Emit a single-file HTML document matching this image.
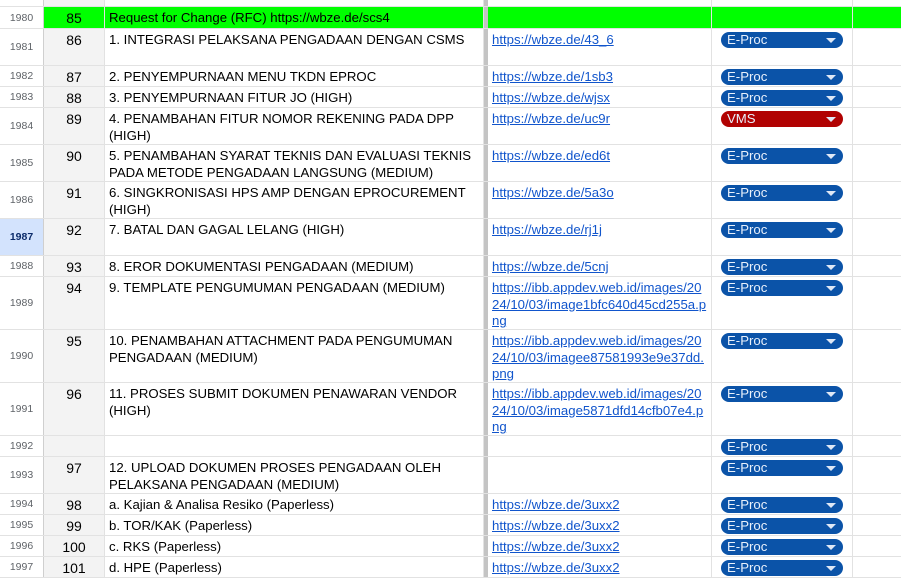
<!DOCTYPE html>
<html><head><style>
body{margin:0;width:901px;height:577px;overflow:hidden;background:#fff;font-family:"Liberation Sans",Arial,sans-serif;}
.r{position:absolute;left:0;width:901px;box-sizing:border-box;border-bottom:1px solid #e2e2e2;}
.c{position:absolute;top:0;bottom:0;box-sizing:border-box;border-right:1px solid #e2e2e2;font-size:13.2px;line-height:16.5px;color:#000;}
.h{left:0;width:44px;border-right:1px solid #cfcfcf;color:#5f6368;font-size:10.5px;display:flex;align-items:center;justify-content:center;line-height:12px;}
.a{left:44px;width:61px;background:#f3f3f3;text-align:center;padding-top:3px;font-size:14px;}
.b{left:105px;width:379px;padding:3px 3px 0 4px;}
.d{left:484px;width:4px;background:#c4c4c4;border-right:none;}
.cc{left:488px;width:224px;padding:3px 0 0 4px;color:#1155cc;text-decoration:underline;white-space:nowrap;overflow:hidden;}
.dd{left:712px;width:141px;}
.e{left:853px;width:48px;border-right:none;}
.chip{position:absolute;left:9px;top:3px;width:122px;height:16px;border-radius:8px;background:#0b53a8;color:#e8f0fb;font-size:13.2px;line-height:16px;padding-left:6px;box-sizing:border-box;}
.chip.v{background:#b10202;}
.chip:after{content:"";position:absolute;right:7px;top:6px;border-left:5px solid transparent;border-right:5px solid transparent;border-top:5px solid #dfe8f5;}
.g .a,.g .b,.g .cc,.g .dd,.g .e{background:#00ff00;}
.sel{background:#d3e3fd;color:#0b2b6a;font-weight:bold;}
</style></head><body>
<div class="r" style="top:-14px;height:21px"><div class="c h">1979</div><div class="c a"></div><div class="c b"></div><div class="c d"></div><div class="c cc"></div><div class="c dd"></div><div class="c e"></div></div>
<div class="r g" style="top:7px;height:22px"><div class="c h">1980</div><div class="c a">85</div><div class="c b">Request for Change (RFC) https://wbze.de/scs4</div><div class="c d"></div><div class="c cc"></div><div class="c dd"></div><div class="c e"></div></div>
<div class="r" style="top:29px;height:37px"><div class="c h">1981</div><div class="c a">86</div><div class="c b">1. INTEGRASI PELAKSANA PENGADAAN DENGAN CSMS</div><div class="c d"></div><div class="c cc">https://wbze.de/43_6</div><div class="c dd"><div class="chip">E-Proc</div></div><div class="c e"></div></div>
<div class="r" style="top:66px;height:21px"><div class="c h">1982</div><div class="c a">87</div><div class="c b">2. PENYEMPURNAAN MENU TKDN EPROC</div><div class="c d"></div><div class="c cc">https://wbze.de/1sb3</div><div class="c dd"><div class="chip">E-Proc</div></div><div class="c e"></div></div>
<div class="r" style="top:87px;height:21px"><div class="c h">1983</div><div class="c a">88</div><div class="c b">3. PENYEMPURNAAN FITUR JO (HIGH)</div><div class="c d"></div><div class="c cc">https://wbze.de/wjsx</div><div class="c dd"><div class="chip">E-Proc</div></div><div class="c e"></div></div>
<div class="r" style="top:108px;height:37px"><div class="c h">1984</div><div class="c a">89</div><div class="c b">4. PENAMBAHAN FITUR NOMOR REKENING PADA DPP (HIGH)</div><div class="c d"></div><div class="c cc">https://wbze.de/uc9r</div><div class="c dd"><div class="chip v">VMS</div></div><div class="c e"></div></div>
<div class="r" style="top:145px;height:37px"><div class="c h">1985</div><div class="c a">90</div><div class="c b">5. PENAMBAHAN SYARAT TEKNIS DAN EVALUASI TEKNIS PADA METODE PENGADAAN LANGSUNG (MEDIUM)</div><div class="c d"></div><div class="c cc">https://wbze.de/ed6t</div><div class="c dd"><div class="chip">E-Proc</div></div><div class="c e"></div></div>
<div class="r" style="top:182px;height:37px"><div class="c h">1986</div><div class="c a">91</div><div class="c b">6. SINGKRONISASI HPS AMP DENGAN EPROCUREMENT (HIGH)</div><div class="c d"></div><div class="c cc">https://wbze.de/5a3o</div><div class="c dd"><div class="chip">E-Proc</div></div><div class="c e"></div></div>
<div class="r" style="top:219px;height:37px"><div class="c h sel">1987</div><div class="c a">92</div><div class="c b">7. BATAL DAN GAGAL LELANG (HIGH)</div><div class="c d"></div><div class="c cc">https://wbze.de/rj1j</div><div class="c dd"><div class="chip">E-Proc</div></div><div class="c e"></div></div>
<div class="r" style="top:256px;height:21px"><div class="c h">1988</div><div class="c a">93</div><div class="c b">8. EROR DOKUMENTASI PENGADAAN (MEDIUM)</div><div class="c d"></div><div class="c cc">https://wbze.de/5cnj</div><div class="c dd"><div class="chip">E-Proc</div></div><div class="c e"></div></div>
<div class="r" style="top:277px;height:53px"><div class="c h">1989</div><div class="c a">94</div><div class="c b">9. TEMPLATE PENGUMUMAN PENGADAAN (MEDIUM)</div><div class="c d"></div><div class="c cc">https://ibb.appdev.web.id/images/20<br>24/10/03/image1bfc640d45cd255a.p<br>ng</div><div class="c dd"><div class="chip">E-Proc</div></div><div class="c e"></div></div>
<div class="r" style="top:330px;height:53px"><div class="c h">1990</div><div class="c a">95</div><div class="c b">10. PENAMBAHAN ATTACHMENT PADA PENGUMUMAN PENGADAAN (MEDIUM)</div><div class="c d"></div><div class="c cc">https://ibb.appdev.web.id/images/20<br>24/10/03/imagee87581993e9e37dd.<br>png</div><div class="c dd"><div class="chip">E-Proc</div></div><div class="c e"></div></div>
<div class="r" style="top:383px;height:53px"><div class="c h">1991</div><div class="c a">96</div><div class="c b">11. PROSES SUBMIT DOKUMEN PENAWARAN VENDOR (HIGH)</div><div class="c d"></div><div class="c cc">https://ibb.appdev.web.id/images/20<br>24/10/03/image5871dfd14cfb07e4.p<br>ng</div><div class="c dd"><div class="chip">E-Proc</div></div><div class="c e"></div></div>
<div class="r" style="top:436px;height:21px"><div class="c h">1992</div><div class="c a"></div><div class="c b"></div><div class="c d"></div><div class="c cc"></div><div class="c dd"><div class="chip">E-Proc</div></div><div class="c e"></div></div>
<div class="r" style="top:457px;height:37px"><div class="c h">1993</div><div class="c a">97</div><div class="c b">12. UPLOAD DOKUMEN PROSES PENGADAAN OLEH PELAKSANA PENGADAAN (MEDIUM)</div><div class="c d"></div><div class="c cc"></div><div class="c dd"><div class="chip">E-Proc</div></div><div class="c e"></div></div>
<div class="r" style="top:494px;height:21px"><div class="c h">1994</div><div class="c a">98</div><div class="c b">a. Kajian &amp; Analisa Resiko (Paperless)</div><div class="c d"></div><div class="c cc">https://wbze.de/3uxx2</div><div class="c dd"><div class="chip">E-Proc</div></div><div class="c e"></div></div>
<div class="r" style="top:515px;height:21px"><div class="c h">1995</div><div class="c a">99</div><div class="c b">b. TOR/KAK (Paperless)</div><div class="c d"></div><div class="c cc">https://wbze.de/3uxx2</div><div class="c dd"><div class="chip">E-Proc</div></div><div class="c e"></div></div>
<div class="r" style="top:536px;height:21px"><div class="c h">1996</div><div class="c a">100</div><div class="c b">c. RKS (Paperless)</div><div class="c d"></div><div class="c cc">https://wbze.de/3uxx2</div><div class="c dd"><div class="chip">E-Proc</div></div><div class="c e"></div></div>
<div class="r" style="top:557px;height:21px"><div class="c h">1997</div><div class="c a">101</div><div class="c b">d. HPE (Paperless)</div><div class="c d"></div><div class="c cc">https://wbze.de/3uxx2</div><div class="c dd"><div class="chip">E-Proc</div></div><div class="c e"></div></div>
</body></html>
